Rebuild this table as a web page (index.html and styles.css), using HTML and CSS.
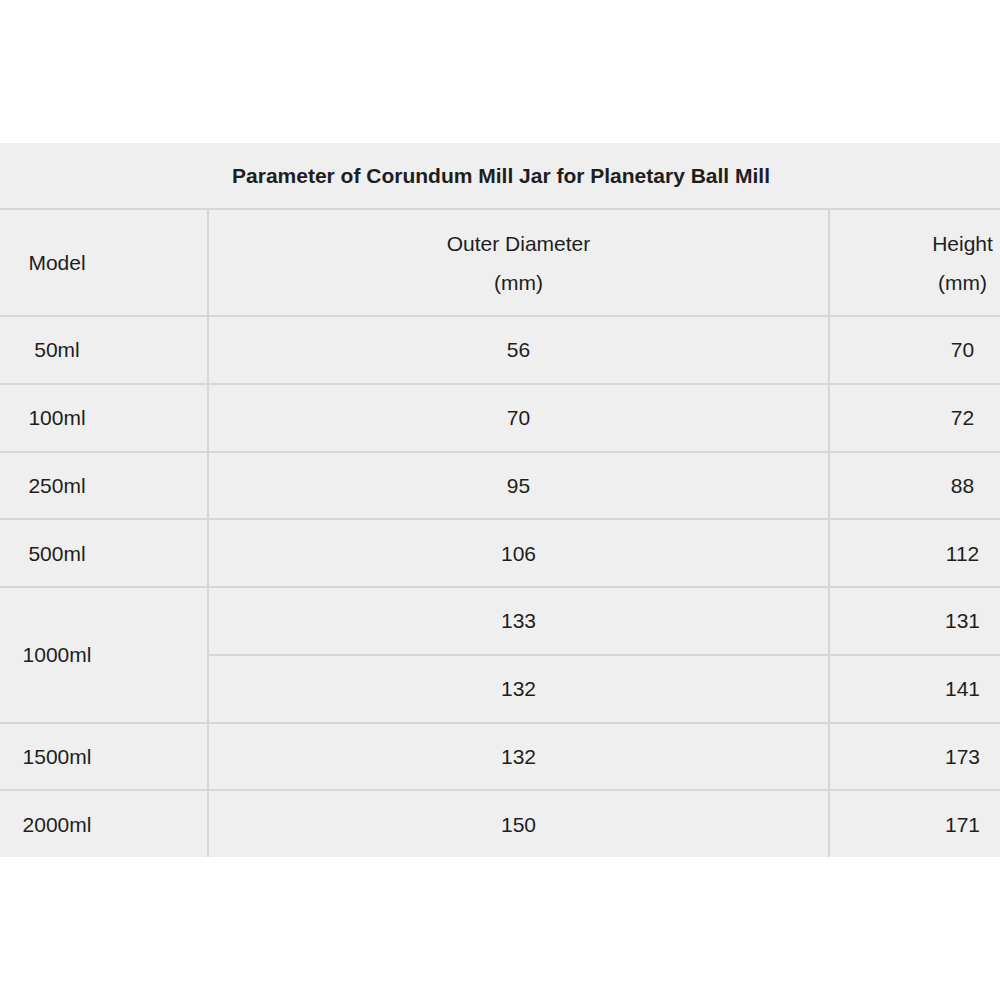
FILE: index.html
```html
<!DOCTYPE html>
<html>
<head>
<meta charset="utf-8">
<link rel="stylesheet" href="styles.css">
</head>
<body>
<div class="frame">
  <table class="params">
    <colgroup>
      <col class="c-model">
      <col class="c-outer">
      <col class="c-height">
    </colgroup>
    <tr class="title-row"><th colspan="3">Parameter of Corundum Mill Jar for Planetary Ball Mill</th></tr>
    <tr class="head-row">
      <td>Model</td>
      <td>Outer Diameter<br>(mm)</td>
      <td>Height<br>(mm)</td>
    </tr>
    <tr><td>50ml</td><td>56</td><td>70</td></tr>
    <tr><td>100ml</td><td>70</td><td>72</td></tr>
    <tr><td>250ml</td><td>95</td><td>88</td></tr>
    <tr><td>500ml</td><td>106</td><td>112</td></tr>
    <tr><td rowspan="2">1000ml</td><td>133</td><td>131</td></tr>
    <tr><td>132</td><td>141</td></tr>
    <tr><td>1500ml</td><td>132</td><td>173</td></tr>
    <tr><td>2000ml</td><td>150</td><td>171</td></tr>
  </table>
</div>
</body>
</html>
```
FILE: styles.css
```css
html, body {
  margin: 0;
  padding: 0;
  background: #ffffff;
}
.frame {
  width: 1000px;
  overflow: hidden;
  padding-top: 143px;
}
.params {
  margin-left: -95px;
  width: 1190px;
  table-layout: fixed;
  border-collapse: collapse;
  background: #efefef;
  font-family: "Liberation Sans", Arial, sans-serif;
  font-size: 21px;
  color: #1e1e1e;
}
.c-model { width: 302px; }
.c-outer { width: 621px; }
.c-height { width: 267px; }
.params th,
.params td {
  border: 2px solid #d6d6d6;
  padding: 0;
  text-align: center;
  vertical-align: middle;
  line-height: 39px;
  height: 65.75px;
}
.params tr:first-child th {
  border-top: none;
  border-left: none;
  border-right: none;
}
.params tr:last-child td {
  border-bottom: none;
}
.title-row th {
  font-size: 21px;
  font-weight: bold;
  height: 65px;
}
.head-row td {
  height: 105px;
}
```
